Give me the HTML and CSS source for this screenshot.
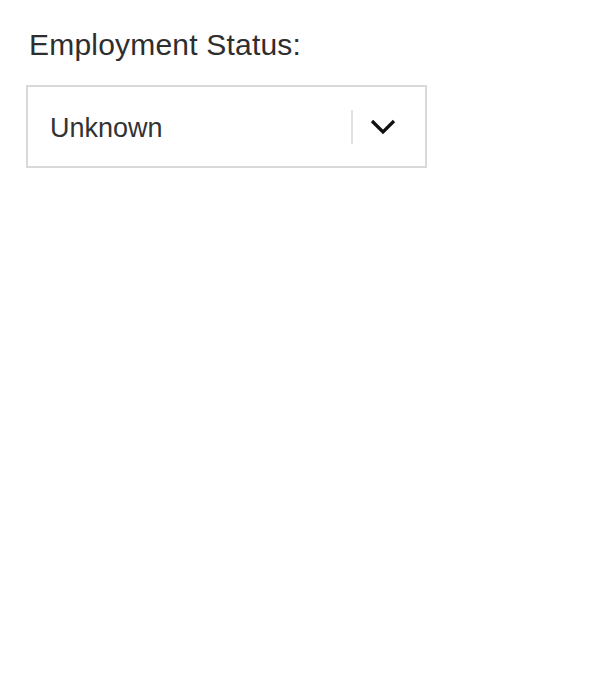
FILE: index.html
```html
<!DOCTYPE html>
<html lang="en">
<head>
  <meta charset="UTF-8" />
  <meta name="viewport" content="width=device-width, initial-scale=1.0" />
  <title>Employment Status</title>
  <link rel="stylesheet" href="styles.css">
</head>
<body>
  <div class="field">
    <label class="field-label" for="employmentStatus">Employment Status:</label>
    <div class="select-box" id="employmentStatus">
      <span class="select-value">Unknown</span>
      <span class="select-divider"></span>
      <span class="select-arrow">
        <svg width="26" height="16" viewBox="0 0 26 16">
          <path d="M2 2 L13 13 L24 2" fill="none" stroke="#111" stroke-width="3.2" />
        </svg>
      </span>
    </div>
  </div>
</body>
</html>
```

FILE: styles.css
```css
body {
  margin: 0;
  padding: 0;
  background: #fff;
  font-family: 'Liberation Sans', Arial, sans-serif;
  color: #333;
}

.field {
  display: flex;
  flex-direction: column;
  align-items: flex-start;
  padding: 27px 0 0 26px;
}

.field-label {
  font-size: 30px;
  line-height: 36px;
  letter-spacing: 0.2px;
  margin-left: 3px;
  margin-bottom: 22px;
  color: #2e2e2e;
}

.select-box {
  box-sizing: border-box;
  width: 401px;
  height: 83px;
  border: 2px solid #d9d9d9;
  display: flex;
  align-items: center;
}

.select-value {
  flex: 1;
  font-size: 27px;
  padding-left: 22px;
  padding-top: 4px;
  color: #333;
}

.select-divider {
  width: 2px;
  height: 34px;
  margin-right: 2px;
  background: #e2e2e2;
}

.select-arrow {
  width: 70px;
  display: flex;
  justify-content: flex-start;
  align-items: center;
  padding-left: 15px;
  box-sizing: border-box;
}
```
